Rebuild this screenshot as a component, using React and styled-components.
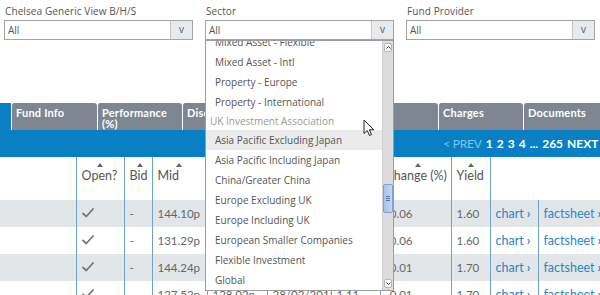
import React from "react";
import styled, { createGlobalStyle } from "styled-components";

const Global = createGlobalStyle`
  html, body { margin: 0; padding: 0; background: #fff; }
  body { width: 600px; height: 295px; overflow: hidden; font-family: "Open Sans", "Liberation Sans", sans-serif; }
  * { box-sizing: border-box; }
`;

const Page = styled.div`
  position: relative;
  width: 600px;
  height: 295px;
  overflow: hidden;
`;

const Filters = styled.div`
  display: flex;
  gap: 12px;
  padding: 4px 5px 0 4px;
  height: 103px;
`;

const Field = styled.div`
  position: relative;
  width: 189px;
  display: flex;
  flex-direction: column;
`;

const Label = styled.label`
  font-size: 10px;
  line-height: 15px;
  color: #555;
  padding-left: 1px;
  letter-spacing: 0.1px;
`;

const SelectBox = styled.div`
  display: flex;
  height: 20px;
  border: 1px solid #a3a3a3;
  margin-top: 1px;
`;

const SelectValue = styled.div`
  flex: 1;
  font-size: 10px;
  line-height: 18px;
  color: #555;
  padding-left: 3px;
`;

const SelectBtn = styled.div`
  width: 22px;
  background: #e7ebee;
  border-left: 1px solid #c4c8cc;
  font-size: 10px;
  line-height: 17px;
  text-align: center;
  color: #555;
`;

const DropList = styled.div`
  position: absolute;
  top: 36px;
  left: 0;
  width: 189px;
  height: 251px;
  border: 1px solid #9d9d9d;
  background: #fff;
  display: flex;
  z-index: 5;
`;

const ListBody = styled.div`
  flex: 1;
  overflow: hidden;
  padding-top: 1px;
`;

const ListInner = styled.div`
  margin-top: -10px;
`;

const Option = styled.div`
  font-size: 10px;
  padding-left: ${(p) => (p.$group ? 4 : 9)}px;
  background: ${(p) => (p.$active ? "#ebebeb" : "transparent")};
  color: ${(p) => (p.$group ? "#9a9a9a" : "#555")};
  height: ${(p) => (p.$group ? 18 : 20)}px;
  line-height: ${(p) => (p.$group ? 18 : 20)}px;
  white-space: nowrap;
`;

const Scrollbar = styled.div`
  width: 11px;
  background: #dcdcdc;
  border-left: 1px solid #cfcfcf;
  display: flex;
  flex-direction: column;
  padding: 2px 0 2px 0;
`;

const ScrollBtn = styled.div`
  height: 9px;
  background: #fbfbfb;
  border: 1px solid #b5b5b5;
  border-radius: 2px;
  margin: 0 1px;
  display: flex;
  align-items: center;
  justify-content: center;
`;

const Track = styled.div`
  flex: 1;
  display: flex;
  flex-direction: column;
  padding-top: 132px;
`;

const Thumb = styled.div`
  height: 29px;
  background: linear-gradient(to right, #a9c4ea, #c4d7f3);
  border: 1px solid #7f9fd2;
  border-radius: 2px;
  display: flex;
  flex-direction: column;
  align-items: center;
  justify-content: center;
  gap: 1px;
`;

const Grip = styled.span`
  width: 4px;
  height: 1px;
  background: #4f73b6;
`;

const Tabs = styled.div`
  display: flex;
  height: 27px;
  align-items: stretch;
`;

const Tab = styled.div`
  width: ${(p) => p.$w}px;
  flex-shrink: 0;
  background: ${(p) => (p.$active ? "#0a80c4" : "#7e8791")};
  border-left: ${(p) => (p.$active ? "none" : "1px solid #fff")};
  border-radius: ${(p) => (p.$active ? "0" : "3px 3px 0 0")};
  color: #fff;
  font-family: Lato, "Open Sans", sans-serif;
  font-weight: 700;
  font-size: 11px;
  line-height: 11px;
  padding: 4px 4px 0 4px;
  letter-spacing: 0.2px;
`;

const BlueBar = styled.div`
  height: 27px;
  background: #0a80c4;
  display: flex;
  justify-content: flex-end;
  align-items: center;
  gap: 4px;
  margin-right: -8px;
  font-family: Lato, "Open Sans", sans-serif;
  font-weight: 700;
  font-size: 12px;
  color: #fff;
`;

const PageLink = styled.span`
  color: ${(p) => (p.$dim ? "#7fc3ec" : "#fff")};
  font-weight: ${(p) => (p.$dim ? 400 : 700)};
  letter-spacing: ${(p) => (p.$dim ? "-0.2px" : "0")};
`;

const Table = styled.table`
  border-collapse: collapse;
  table-layout: fixed;
  width: 640px;
  font-family: Lato, "Open Sans", sans-serif;
`;

const Th = styled.th`
  height: 43px;
  border-left: ${(p) => (p.$line ? "1px solid #6fa3cc" : "none")};
  text-align: left;
  vertical-align: top;
  padding: 6px 0 0 5px;
  font-weight: 400;
  font-size: 12.5px;
  color: #555;
  white-space: nowrap;
`;

const HeadInner = styled.div`
  display: flex;
  flex-direction: column;
  align-items: flex-start;
  line-height: 14px;
`;

const Arrow = styled.span`
  width: 0;
  height: 0;
  border-left: 3px solid transparent;
  border-right: 3px solid transparent;
  border-bottom: 4px solid #666;
  margin-bottom: 2px;
  margin-left: ${(p) => p.$x || 0}px;
`;

const Tr = styled.tr`
  background: ${(p) => (p.$alt ? "#e3e6e9" : "#fff")};
`;

const Td = styled.td`
  height: 27px;
  border-left: ${(p) => (p.$line ? "1px solid #6fa3cc" : "none")};
  padding: 0 0 0 5px;
  font-size: 11.5px;
  color: #666;
  white-space: nowrap;
  overflow: hidden;
`;

const Link = styled.span`
  color: #2a86c4;
  font-size: 12.5px;
  b { font-weight: 700; margin-left: 3px; }
`;

const Cursor = styled.svg`
  position: absolute;
  left: 363px;
  top: 119px;
  z-index: 10;
`;

const options = [
  { t: "Mixed Asset - Flexible" },
  { t: "Mixed Asset - Intl" },
  { t: "Property - Europe" },
  { t: "Property - International" },
  { t: "UK Investment Association", group: true },
  { t: "Asia Pacific Excluding Japan", active: true },
  { t: "Asia Pacific Including Japan" },
  { t: "China/Greater China" },
  { t: "Europe Excluding UK" },
  { t: "Europe Including UK" },
  { t: "European Smaller Companies" },
  { t: "Flexible Investment" },
  { t: "Global" },
  { t: "Global Bonds" },
];

const rows = [
  { mid: "144.10p", offer: "146.25p", date: "28/02/2015", chp: "1.10", ch: "-0.06", y: "1.60" },
  { mid: "131.29p", offer: "133.10p", date: "28/02/2015", chp: "1.20", ch: "-0.06", y: "1.60" },
  { mid: "144.24p", offer: "146.40p", date: "28/02/2015", chp: "1.11", ch: "-0.01", y: "1.70" },
  { mid: "127.52p", offer: "128.02p", date: "28/02/2015", chp: "1.11", ch: "-0.01", y: "1.70" },
];

const Check = () => (
  <svg width="12" height="10" viewBox="0 0 12 10">
    <path d="M1 5.5 L4.3 8.5 L11 1" fill="none" stroke="#777" strokeWidth="1.8" strokeLinecap="round" strokeLinejoin="round" />
  </svg>
);

function Select({ label, children }) {
  return (
    <Field>
      <Label>{label}</Label>
      <SelectBox>
        <SelectValue>All</SelectValue>
        <SelectBtn>v</SelectBtn>
      </SelectBox>
      {children}
    </Field>
  );
}

const heads = [
  { t: "", line: false },
  { t: "Open?", x: 15, line: true },
  { t: "Bid", x: 7, line: true },
  { t: "Mid", x: 18, line: true },
  { t: "Offer", x: 10, line: true },
  { t: "Date", x: 10, line: true },
  { t: "Chg", x: 8, line: true },
  { t: "Change (%)", x: 29, line: true },
  { t: "Yield", x: 11, line: true },
  { t: "", line: true },
  { t: "", line: false },
];

export default function App() {
  return (
    <Page>
      <Global />
      <Filters>
        <Select label="Chelsea Generic View B/H/S" />
        <Select label="Sector">
          <DropList>
            <ListBody>
              <ListInner>
                {options.map((o) => (
                  <Option key={o.t} $group={o.group} $active={o.active}>
                    {o.t}
                  </Option>
                ))}
              </ListInner>
            </ListBody>
            <Scrollbar>
              <ScrollBtn>
                <svg width="5" height="3" viewBox="0 0 5 3"><path d="M0.5 2.5 L2.5 0.5 L4.5 2.5" fill="none" stroke="#333" strokeWidth="1" /></svg>
              </ScrollBtn>
              <Track>
                <Thumb>
                  <Grip />
                  <Grip />
                  <Grip />
                </Thumb>
              </Track>
              <ScrollBtn>
                <svg width="5" height="3" viewBox="0 0 5 3"><path d="M0.5 0.5 L2.5 2.5 L4.5 0.5" fill="none" stroke="#333" strokeWidth="1" /></svg>
              </ScrollBtn>
            </Scrollbar>
          </DropList>
        </Select>
        <Select label="Fund Provider" />
      </Filters>

      <Tabs>
        <Tab $w={11} $active />
        <Tab $w={86}>Fund Info</Tab>
        <Tab $w={85}>Performance<br />(%)</Tab>
        <Tab $w={85}>Discrete</Tab>
        <Tab $w={85}>Risk</Tab>
        <Tab $w={86}>Yield</Tab>
        <Tab $w={85}>Charges</Tab>
        <Tab $w={85}>Documents</Tab>
      </Tabs>

      <BlueBar>
        <PageLink $dim>&lt; PREV</PageLink>
        <PageLink>1</PageLink>
        <PageLink>2</PageLink>
        <PageLink>3</PageLink>
        <PageLink>4</PageLink>
        <PageLink>...</PageLink>
        <PageLink>265</PageLink>
        <PageLink>NEXT &gt;</PageLink>
      </BlueBar>

      <Table>
        <colgroup>
          <col style={{ width: 76 }} />
          <col style={{ width: 48 }} />
          <col style={{ width: 28 }} />
          <col style={{ width: 55 }} />
          <col style={{ width: 60 }} />
          <col style={{ width: 64 }} />
          <col style={{ width: 49 }} />
          <col style={{ width: 71 }} />
          <col style={{ width: 39 }} />
          <col style={{ width: 48 }} />
          <col style={{ width: 102 }} />
        </colgroup>
        <thead>
          <tr>
            {heads.map((h, i) => (
              <Th key={i} $line={h.line}>
                {h.t && (
                  <HeadInner>
                    <Arrow $x={h.x} />
                    {h.t}
                  </HeadInner>
                )}
              </Th>
            ))}
          </tr>
        </thead>
        <tbody>
          {rows.map((r, i) => (
            <Tr key={i} $alt={i % 2 === 0}>
              <Td />
              <Td $line><Check /></Td>
              <Td $line>-</Td>
              <Td $line>{r.mid}</Td>
              <Td $line>{r.offer}</Td>
              <Td $line>{r.date}</Td>
              <Td $line>{r.chp}</Td>
              <Td $line>{r.ch}</Td>
              <Td $line>{r.y}</Td>
              <Td $line><Link>chart<b>›</b></Link></Td>
              <Td $line><Link>factsheet<b>›</b></Link></Td>
            </Tr>
          ))}
        </tbody>
      </Table>

      <Cursor width="12" height="18" viewBox="0 0 12 18">
        <path d="M1 1 L1 14.5 L4.2 11.5 L6.5 16.5 L8.6 15.6 L6.4 10.8 L10.8 10.8 Z" fill="#fff" stroke="#222" strokeWidth="1" strokeLinejoin="round" />
      </Cursor>
    </Page>
  );
}
